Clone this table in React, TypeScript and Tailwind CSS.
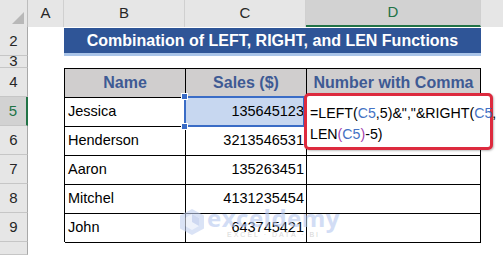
import React from 'react';

const rowNums = ['2', '3', '4', '5', '6', '7', '8', '9', ''];

const people = [
  { name: 'Jessica', sales: '135645123' },
  { name: 'Henderson', sales: '3213546531' },
  { name: 'Aaron', sales: '135263451' },
  { name: 'Mitchel', sales: '4131235454' },
  { name: 'John', sales: '643745421' },
];

const ColHead = ({ label, active }: { label: string; active?: boolean }) => (
  <div
    className={`flex items-center justify-center border-r border-[#d0d0d0] text-[15px] ${
      active ? 'bg-[#d2d2d2] text-[#217346] border-b-2 border-b-[#217346]' : 'bg-[#e6e6e6] text-[#262626]'
    }`}
  >
    {label}
  </div>
);

const Watermark = () => (
  <div className="absolute left-[179px] top-[206px] flex items-center gap-[2px] opacity-60 pointer-events-none">
    <svg width="26" height="28" viewBox="0 0 26 28">
      <path d="M13 1 L25 7.5 L25 20.5 L13 27 L1 20.5 L1 7.5 Z" fill="#c3d1f1" />
      <path d="M13 6 L20 10 L20 18 L13 22 L6 18 L6 10 Z" fill="#e4ebfa" />
      <path d="M13 6 L13 14 L20 18 L20 10 Z" fill="#aebfe9" />
    </svg>
    <div className="flex flex-col items-start leading-none">
      <span className="text-[24px] font-bold text-[#b5c7f0] tracking-[0.5px] font-['Open_Sans']">exceldemy</span>
      <span className="text-[7px] text-[#bdbdbd] tracking-[2px] ml-[20px] mt-[1px]">EXCEL · DATA · BI</span>
    </div>
  </div>
);

export default function App() {
  return (
    <div className="relative w-[503px] h-[255px] overflow-hidden bg-white font-['Liberation_Sans',Arial,sans-serif]">
      <div className="grid h-full grid-cols-[28px_36px_121px_121px_175px_1fr] grid-rows-[27px_29px_12px_29px_29px_29px_29px_29px_29px_1fr]">
        {/* corner */}
        <div className="relative bg-[#e6e6e6] border-r border-[#bdbdbd]">
          <div className="absolute right-[3px] bottom-[3px] w-0 h-0 border-l-[12px] border-l-transparent border-b-[12px] border-b-[#b8b8b8]" />
        </div>
        <ColHead label="A" />
        <ColHead label="B" />
        <ColHead label="C" />
        <ColHead label="D" active />
        <div className="bg-[#e6e6e6]" />

        {/* row headers */}
        {rowNums.map((n, i) => (
          <div
            key={i}
            style={{ gridRow: i + 2, gridColumn: 1 }}
            className={`flex justify-center overflow-hidden border-b border-[#c6c6c6] text-[15px] ${
              n === '3' ? 'items-end leading-[12px]' : 'items-center'
            } ${
              n === '5'
                ? 'bg-[#d2d2d2] text-[#217346] border-r-2 border-r-[#217346]'
                : 'bg-[#e6e6e6] text-[#262626] border-r border-r-[#a8a8a8]'
            }`}
          >
            {n}
          </div>
        ))}

        {/* title */}
        <div className="col-start-3 col-end-6 row-start-2 mt-[1px] flex items-center justify-center bg-[#2f5597] border-b-[3px] border-[#a9c4e8] text-[16px] font-bold text-white">
          Combination of LEFT, RIGHT, and LEN Functions
        </div>

        {/* table */}
        <div className="col-start-3 col-end-6 row-start-4 row-end-10 grid grid-cols-[121px_121px_1fr] grid-rows-[29px_29px_29px_29px_29px_29px] border-t border-l border-black">
          <div className="flex items-center justify-center bg-[#d0cece] border-r border-b border-black text-[16px] font-bold text-[#3e5a94]">Name</div>
          <div className="flex items-center justify-center bg-[#d0cece] border-r border-b border-black text-[16px] font-bold text-[#3e5a94]">Sales ($)</div>
          <div className="flex items-center justify-center bg-[#d0cece] border-r border-b border-black text-[16px] font-bold text-[#3e5a94]">Number with Comma</div>
          {people.map((p, i) => (
            <React.Fragment key={p.name}>
              <div className="flex items-center pl-[3px] border-r border-b border-black text-[14.5px] text-black">{p.name}</div>
              <div
                className={`flex items-center justify-end pr-[2px] border-r border-b border-black text-[14.5px] text-black ${
                  i === 0 ? 'bg-[#c7d7f0]' : ''
                }`}
              >
                {p.sales}
              </div>
              <div className="border-r border-b border-black" />
            </React.Fragment>
          ))}
        </div>
      </div>

      {/* C5 selection */}
      <div className="absolute left-[184px] top-[96px] w-[121px] h-[31px] border-2 border-[#3a6cc6] pointer-events-none">
        <div className="absolute -left-[5px] -top-[5px] w-[7px] h-[7px] bg-[#3a6cc6] border border-white" />
        <div className="absolute -left-[5px] -bottom-[5px] w-[7px] h-[7px] bg-[#3a6cc6] border border-white" />
      </div>

      {/* formula being edited in D5, highlighted */}
      <div className="absolute left-[304px] top-[93px] w-[189px] h-[57px] rounded-[5px] border-[3px] border-[#dd2a3e] bg-white shadow-[1px_1px_2px_rgba(0,0,0,0.25)] pl-[3px] pt-[7px] text-[14.2px] leading-[21px] text-black">
        <div className="whitespace-nowrap">
          =LEFT(<span className="text-[#4472c4]">C5</span>,5)&amp;","&amp;RIGHT(<span className="text-[#4472c4]">C5</span>,
        </div>
        <div className="whitespace-nowrap">
          LEN<span className="text-[#a23fb0]">(</span>
          <span className="text-[#4472c4]">C5</span>
          <span className="text-[#a23fb0]">)</span>-5)
        </div>
      </div>

      <Watermark />
    </div>
  );
}
